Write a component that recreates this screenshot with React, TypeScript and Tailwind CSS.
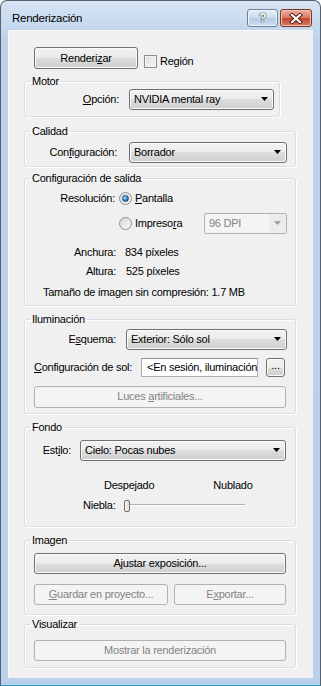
import React from "react";

/* small shared bits */

const btnNormal =
  "border border-[#707070] rounded-[3px] bg-[linear-gradient(#f2f2f2,#ebebeb_50%,#dddddd_50%,#cfcfcf)] shadow-[inset_0_0_0_1px_#fbfbfb] text-black";
const btnDisabled =
  "border border-[#adb2b5] rounded-[3px] bg-[#f4f4f4] text-[#838383]";

function Btn({ children, disabled, className = "" }: any) {
  return (
    <div
      className={`flex items-center justify-center ${disabled ? btnDisabled : btnNormal} ${className}`}
    >
      {children}
    </div>
  );
}

function Arrow({ color = "#000" }: any) {
  return (
    <svg width="7" height="4" viewBox="0 0 7 4">
      <path d="M0 0H7L3.5 4Z" fill={color} />
    </svg>
  );
}

function Combo({ value, className = "" }: any) {
  return (
    <div
      className={`flex items-center justify-between pl-[4px] pr-[5px] ${btnNormal} ${className}`}
    >
      <span className="whitespace-nowrap">{value}</span>
      <Arrow />
    </div>
  );
}

function Group({ title, children, className = "" }: any) {
  return (
    <fieldset
      className={`ml-[15px] border border-[#d5dfe5] rounded-[3px] shadow-[inset_1px_1px_0_#ffffff,1px_1px_0_#ffffff] ${className}`}
    >
      <legend className="ml-[5px] px-[2px] leading-[15px]">{title}</legend>
      {children}
    </fieldset>
  );
}

function Radio({ checked }: any) {
  return (
    <div className="w-[13px] h-[13px] rounded-full border border-[#8e8f8f] bg-[linear-gradient(135deg,#d9d9d9,#f7f7f7)] flex items-center justify-center shrink-0">
      {checked && (
        <div className="w-[7px] h-[7px] rounded-full bg-[radial-gradient(circle_at_35%_35%,#b9e4fc,#2c80c2_55%,#17476f)] border border-[#1d5480]" />
      )}
    </div>
  );
}

export default function App() {
  return (
    <div className="w-[321px] h-[686px] font-['Liberation_Sans',Arial,sans-serif] text-[11px] tracking-[-0.25px] text-black">
      <div className="h-full flex flex-col border border-[#56626f] border-b-[#2aa0c2] rounded-t-[7px] bg-[linear-gradient(#d6e4f3,#bcd2ea_40px,#b9d1ea)] px-[7px] pb-[7px]">
        {/* TITLE BAR */}
        <div className="h-[29px] flex items-start justify-between">
          <span className="mt-[10px] ml-[4px] text-[11.5px] leading-[14px]">Renderización</span>
          <div className="flex gap-[2px] mt-[8px] mr-[1px]">
            <div className="w-[31px] h-[18px] rounded-[3px] border border-[#6f8196] bg-[linear-gradient(#e4eef8,#cadcef_50%,#b4cbe4_50%,#cadef2)] shadow-[inset_0_0_0_1px_#eef4fb] flex items-center justify-center">
              <span className="text-white font-bold text-[12px] leading-none [text-shadow:0_0_1px_#2f3d4c,0_0_1px_#2f3d4c,0_0_1px_#2f3d4c]">
                ?
              </span>
            </div>
            <div className="w-[32px] h-[18px] rounded-[3px] border border-[#7a2e24] bg-[linear-gradient(#eab2a2,#d9745f_50%,#c3442d_50%,#d77c63)] shadow-[inset_0_0_0_1px_#f1c4b7] flex items-center justify-center">
              <svg width="14" height="11" viewBox="0 0 14 11">
                <path d="M3 2L11 9M11 2L3 9" stroke="#4a1a12" strokeWidth="4" strokeLinecap="square" />
                <path d="M3 2L11 9M11 2L3 9" stroke="#ffffff" strokeWidth="2.2" strokeLinecap="square" />
              </svg>
            </div>
          </div>
        </div>

        {/* CONTENT */}
        <div className="flex-1 bg-[#f0f0f0] border-t border-l border-[#f8f8f8] flex flex-col pt-[16px]">
          <div className="flex items-start ml-[25px]">
            <Btn className="w-[104px] h-[22px]">
              <span>
                Renderi<u>z</u>ar
              </span>
            </Btn>
            <div className="flex items-center ml-[6px] mt-[6px]">
              <div className="w-[13px] h-[13px] border border-[#8e8f8f] bg-[linear-gradient(135deg,#dcdcdc,#f8f8f8)] shadow-[inset_0_0_0_1px_#f4f4f4]" />
              <span className="ml-[3px]">
                Re<u>g</u>ión
              </span>
            </div>
          </div>

          {/* MOTOR */}
          <Group title="Motor" className="w-[256px] mt-[4px] pb-[6px]">
            <div className="flex items-center">
              <span className="w-[94px] text-right">
                <u>O</u>pción:
              </span>
              <Combo value="NVIDIA mental ray" className="ml-[10px] w-[145px] h-[21px]" />
            </div>
          </Group>

          {/* CALIDAD */}
          <Group title="Calidad" className="w-[272px] mt-[7px] pb-[3px]">
            <div className="flex items-center mt-[3px]">
              <span className="w-[92px] text-right">
                Con<u>f</u>iguración:
              </span>
              <Combo value="Borrador" className="ml-[12px] w-[158px] h-[21px]" />
            </div>
          </Group>

          {/* CONFIGURACION DE SALIDA */}
          <Group title="Configuración de salida" className="w-[272px] mt-[4px] pb-[5px]">
            <div className="flex items-center h-[20px] mt-[3px]">
              <span className="w-[90px] text-right">Resolución:</span>
              <div className="ml-[4px]">
                <Radio checked />
              </div>
              <span className="ml-[3px]">
                <u>P</u>antalla
              </span>
            </div>
            <div className="flex items-center h-[21px] mt-[4px]">
              <div className="ml-[94px]">
                <Radio />
              </div>
              <span className="ml-[3px]">
                Impreso<u>r</u>a
              </span>
              <div className="ml-auto mr-[8px] w-[83px] h-[21px] border border-[#adb2b5] rounded-[2px] bg-[#f4f4f4] flex items-center text-[#838383]">
                <span className="flex-1 pl-[4px]">96 DPI</span>
                <div className="w-[17px] h-full flex items-center justify-center bg-[#ececec]">
                  <Arrow color="#a0a0a0" />
                </div>
              </div>
            </div>
            <div className="flex items-center h-[15px] mt-[11px]">
              <span className="w-[91px] text-right">Anchura:</span>
              <span className="ml-[9px]">834 píxeles</span>
            </div>
            <div className="flex items-center h-[15px] mt-[4px]">
              <span className="w-[91px] text-right">Altura:</span>
              <span className="ml-[10px]">525 píxeles</span>
            </div>
            <div className="flex items-center h-[15px] mt-[6px] pl-[18px]">
              Tamaño de imagen sin compresión: 1.7 MB
            </div>
          </Group>

          {/* ILUMINACION */}
          <Group title="Iluminación" className="w-[272px] mt-[6px] pb-[5px]">
            <div className="flex items-center mt-[2px]">
              <span className="w-[91px] text-right">
                E<u>s</u>quema:
              </span>
              <Combo value="Exterior: Sólo sol" className="ml-[10px] w-[161px] h-[21px]" />
            </div>
            <div className="flex items-center mt-[8px] ml-[9px]">
              <span>
                <u>C</u>onfiguración de sol:
              </span>
              <div className="ml-auto w-[117px] h-[19px] bg-white border border-[#abadb3] border-t-[#8e9092] overflow-hidden flex items-center pl-[5px]">
                <span className="whitespace-nowrap">&lt;En sesión, iluminación</span>
              </div>
              <Btn className="ml-[8px] mr-[10px] w-[19px] h-[19px]">
                <span className="leading-none -mt-[3px]">...</span>
              </Btn>
            </div>
            <Btn disabled className="ml-[9px] mt-[9px] w-[252px] h-[22px]">
              <span>
                Luces <u>a</u>rtificiales...
              </span>
            </Btn>
          </Group>

          {/* FONDO */}
          <Group title="Fondo" className="w-[272px] mt-[6px] pb-[13px]">
            <div className="flex items-center mt-[5px]">
              <span className="w-[46px] text-right">
                Est<u>i</u>lo:
              </span>
              <Combo value="Cielo: Pocas nubes" className="ml-[9px] w-[206px] h-[21px]" />
            </div>
            <div className="flex items-center h-[15px] mt-[17px]">
              <span className="ml-[79px]">Despejado</span>
              <span className="ml-[59px]">Nublado</span>
            </div>
            <div className="flex items-center h-[15px] mt-[5px]">
              <span className="ml-[58px]">Niebla:</span>
              <div className="relative ml-[8px] w-[121px] h-[13px] flex items-center">
                <div className="w-full h-[2px] border-t border-[#b2b2b2] border-b border-b-white" />
                <div className="absolute left-0 top-[1px] w-[6px] h-[12px] border border-[#707070] rounded-[2px] bg-[linear-gradient(90deg,#f4f4f4,#dcdcdc)]" />
              </div>
            </div>
          </Group>

          {/* IMAGEN */}
          <Group title="Imagen" className="w-[272px] mt-[6px] pb-[9px]">
            <Btn className="ml-[9px] mt-[5px] w-[252px] h-[21px]">
              <span>
                A<u>j</u>ustar exposición...
              </span>
            </Btn>
            <div className="flex ml-[9px] mt-[10px] gap-[6px]">
              <Btn disabled className="w-[134px] h-[21px]">
                <span>
                  <u>G</u>uardar en proyecto...
                </span>
              </Btn>
              <Btn disabled className="w-[112px] h-[21px]">
                <span>
                  E<u>x</u>portar...
                </span>
              </Btn>
            </div>
          </Group>

          {/* VISUALIZAR */}
          <Group title="Visualizar" className="w-[272px] mt-[2px] pb-[6px]">
            <Btn disabled className="ml-[9px] mt-[8px] w-[252px] h-[21px]">
              Mostrar la renderización
            </Btn>
          </Group>
        </div>
      </div>
    </div>
  );
}
